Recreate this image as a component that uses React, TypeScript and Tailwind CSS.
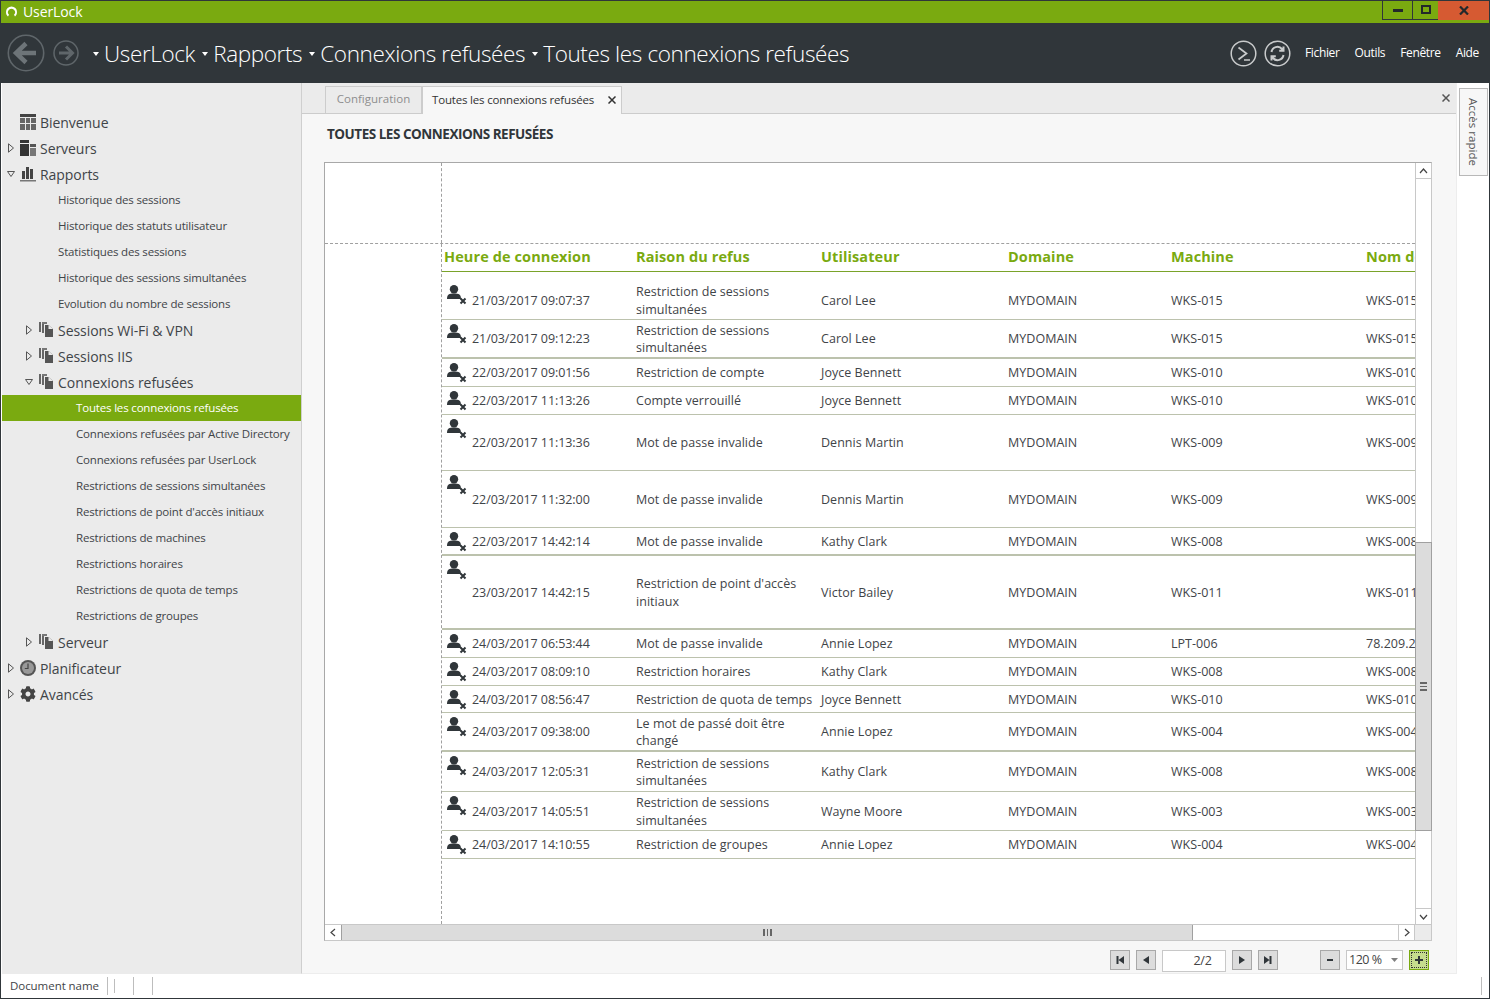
import React from "react";
import { FaCog } from "react-icons/fa";

type Row = { h: string; t: string; r: string[]; u: string; m: string; n: string; b: string };
const rows: Row[] = [
  { h: "h-[39px] mt-[9px]", t: "21/03/2017 09:07:37", r: ["Restriction de sessions", "simultanées"], u: "Carol Lee", m: "WKS-015", n: "WKS-015", b: "border-b" },
  { h: "h-[39px]", t: "21/03/2017 09:12:23", r: ["Restriction de sessions", "simultanées"], u: "Carol Lee", m: "WKS-015", n: "WKS-015", b: "border-b-2" },
  { h: "h-[28px]", t: "22/03/2017 09:01:56", r: ["Restriction de compte"], u: "Joyce Bennett", m: "WKS-010", n: "WKS-010", b: "border-b" },
  { h: "h-[28px]", t: "22/03/2017 11:13:26", r: ["Compte verrouillé"], u: "Joyce Bennett", m: "WKS-010", n: "WKS-010", b: "border-b" },
  { h: "h-[56px]", t: "22/03/2017 11:13:36", r: ["Mot de passe invalide"], u: "Dennis Martin", m: "WKS-009", n: "WKS-009", b: "border-b" },
  { h: "h-[57px]", t: "22/03/2017 11:32:00", r: ["Mot de passe invalide"], u: "Dennis Martin", m: "WKS-009", n: "WKS-009", b: "border-b" },
  { h: "h-[28px]", t: "22/03/2017 14:42:14", r: ["Mot de passe invalide"], u: "Kathy Clark", m: "WKS-008", n: "WKS-008", b: "border-b-2" },
  { h: "h-[74px]", t: "23/03/2017 14:42:15", r: ["Restriction de point d'accès", "initiaux"], u: "Victor Bailey", m: "WKS-011", n: "WKS-011", b: "border-b-2" },
  { h: "h-[28px]", t: "24/03/2017 06:53:44", r: ["Mot de passe invalide"], u: "Annie Lopez", m: "LPT-006", n: "78.209.2", b: "border-b" },
  { h: "h-[28px]", t: "24/03/2017 08:09:10", r: ["Restriction horaires"], u: "Kathy Clark", m: "WKS-008", n: "WKS-008", b: "border-b" },
  { h: "h-[27px]", t: "24/03/2017 08:56:47", r: ["Restriction de quota de temps"], u: "Joyce Bennett", m: "WKS-010", n: "WKS-010", b: "border-b" },
  { h: "h-[39px]", t: "24/03/2017 09:38:00", r: ["Le mot de passé doit être", "changé"], u: "Annie Lopez", m: "WKS-004", n: "WKS-004", b: "border-b-2" },
  { h: "h-[40px]", t: "24/03/2017 12:05:31", r: ["Restriction de sessions", "simultanées"], u: "Kathy Clark", m: "WKS-008", n: "WKS-008", b: "border-b" },
  { h: "h-[39px]", t: "24/03/2017 14:05:51", r: ["Restriction de sessions", "simultanées"], u: "Wayne Moore", m: "WKS-003", n: "WKS-003", b: "border-b" },
  { h: "h-[28px]", t: "24/03/2017 14:10:55", r: ["Restriction de groupes"], u: "Annie Lopez", m: "WKS-004", n: "WKS-004", b: "border-b" },
];

const cols = "grid grid-cols-[194px_185px_187px_163px_195px_200px]";

const Expander = ({ open }: { open?: boolean }) => (
  <svg width="8" height="10" viewBox="0 0 8 10" className="shrink-0">
    {open ? (
      <path d="M0.5 2.5H7.5L4 7.5Z" fill="none" stroke="#555" />
    ) : (
      <path d="M1.5 0.8V9.2L6.5 5Z" fill="none" stroke="#555" />
    )}
  </svg>
);

const Docs = () => (
  <svg width="16" height="16" viewBox="0 0 16 16" className="shrink-0">
    <path d="M1 0h2v10H1zM4 0h2v11H4z" fill="#666" />
    <path d="M7 3h3.500L15 7v8H7z" fill="#555" />
    <path d="M10.500 3L15 7h-4.500z" fill="#ebebeb" />
    <path d="M4 0h5v2H4z" fill="#777" />
  </svg>
);

const GridIcon = () => (
  <svg width="16" height="16" viewBox="0 0 16 16" className="shrink-0">
    <rect x="0" y="0" width="16" height="3" fill="#444" />
    <rect x="0" y="4" width="5" height="5" fill="#666" />
    <rect x="6" y="4" width="4" height="5" fill="#666" />
    <rect x="11" y="4" width="5" height="5" fill="#666" />
    <rect x="0" y="10" width="5" height="6" fill="#666" />
    <rect x="6" y="10" width="4" height="6" fill="#666" />
    <rect x="11" y="10" width="5" height="6" fill="#666" />
  </svg>
);

const ServerIcon = () => (
  <svg width="16" height="16" viewBox="0 0 16 16" className="shrink-0">
    <rect x="0" y="0" width="9" height="3" fill="#333" />
    <rect x="0" y="4" width="9" height="12" fill="#333" />
    <rect x="10" y="4" width="6" height="3" fill="#555" />
    <rect x="10" y="8" width="6" height="8" fill="#777" />
  </svg>
);

const BarsIcon = () => (
  <svg width="16" height="16" viewBox="0 0 16 16" className="shrink-0">
    <rect x="2" y="5" width="3" height="8" fill="#444" />
    <rect x="6" y="1" width="3" height="12" fill="#444" />
    <rect x="10" y="3" width="3" height="10" fill="#444" />
    <rect x="0" y="14" width="16" height="1.5" fill="#777" />
  </svg>
);

const ClockIcon = () => (
  <svg width="16" height="16" viewBox="0 0 16 16" className="shrink-0">
    <circle cx="8" cy="8" r="8" fill="#555" />
    <circle cx="8" cy="8" r="6" fill="#999" />
    <path d="M8 3.5V8.5H4.8" fill="none" stroke="#444" strokeWidth="1.2" />
  </svg>
);

const TreeRow = ({ pad, exp, icon, text, small, active }: { pad: string; exp?: "open" | "closed"; icon?: React.ReactNode; text: string; small?: boolean; active?: boolean }) => (
  <div className={`relative flex h-[26px] items-center ${pad} ${active ? "bg-[#7aaa10] text-white" : "text-[#3f4448]"}`}>
    {exp && (
      <span className="-ml-[13px] mr-[5px] flex w-[8px]">
        <Expander open={exp === "open"} />
      </span>
    )}
    {icon && <span className="mr-[4px] flex">{icon}</span>}
    <span className={`whitespace-nowrap ${small ? "text-[11.5px] tracking-[-0.17px]" : "text-[14px] tracking-[-0.05px]"}`}>{text}</span>
  </div>
);

const UserX = () => (
  <svg width="20" height="20" viewBox="0 0 20 20" className="mt-[3px] mr-[5px] shrink-0 self-start">
    <circle cx="7" cy="4.2" r="4.2" fill="#30363a" />
    <path d="M0 14c0-4.500 2-5.500 7-5.500s7 1 7 5.500z" fill="#30363a" />
    <path d="M13.500 13.500l5 5M18.500 13.500l-5 5" stroke="#30363a" strokeWidth="2" />
  </svg>
);

const Crumb = ({ text }: { text: string }) => (
  <span className="flex items-center">
    <svg width="6" height="4" viewBox="0 0 6 4" className="mr-[5px] mt-[1px]">
      <path d="M0 0H6L3 4Z" fill="#fff" />
    </svg>
    <span className="mt-[2px] mr-[7px] whitespace-nowrap text-[22.5px] font-light tracking-[-0.37px] text-white">{text}</span>
  </span>
);

const TBtn = ({ d, ml }: { d: string; ml: string }) => (
  <div className={`flex h-[20px] w-[20px] items-center justify-center border border-[#a8a8a8] bg-[#dcdcdc] ${ml}`}>
    <svg width="10" height="10" viewBox="0 0 10 10">
      <path d={d} fill="#30363a" />
    </svg>
  </div>
);

export default function App() {
  return (
    <div className="flex h-[999px] w-[1490px] flex-col overflow-hidden border border-[#30363a] bg-white font-['Open_Sans','Noto_Sans',sans-serif]">
      {/* title bar */}
      <div className="flex h-[22px] shrink-0 items-start bg-[#7aaa10]">
        <div className="flex h-[21px] flex-1 items-center pl-[4px]">
          <svg width="13" height="13" viewBox="0 0 13 13">
            <path d="M3 11.500C1.500 10.500 1 8.500 1 7a5.500 5.500 0 0 1 11 0c0 1.500-.5 3.500-2 4.500L9 9.800A3.500 3.500 0 1 0 4 9.800z" fill="#fff" />
          </svg>
          <span className="ml-[5px] text-[14px] tracking-[-0.1px] text-white">UserLock</span>
        </div>
        <div className="-mt-px flex h-[20px]">
          <div className="flex w-[30px] items-center justify-center border-b border-l border-[#30363a]">
            <div className="mt-[2px] h-[3px] w-[10px] bg-[#23282b]" />
          </div>
          <div className="flex w-[26px] items-center justify-center border-b border-l border-[#30363a]">
            <div className="h-[9px] w-[10px] border-2 border-[#23282b]" />
          </div>
          <div className="flex w-[51px] items-center justify-center bg-[#d65a32]">
            <svg width="10" height="9" viewBox="0 0 10 9">
              <path d="M1 0.500l8 8M9 0.500l-8 8" stroke="#23282b" strokeWidth="2.200" />
            </svg>
          </div>
        </div>
      </div>
      {/* header */}
      <div className="flex h-[60px] shrink-0 items-center bg-[#30363a] pr-[10px] pl-[6px]">
        <svg width="38" height="38" viewBox="0 0 38 38">
          <circle cx="19" cy="19" r="17.700" fill="none" stroke="#5f666a" strokeWidth="1.600" />
          <path d="M9 19h20M19 9.500L9 19l10 9.500" fill="none" stroke="#6d7478" strokeWidth="4.500" />
        </svg>
        <svg width="26" height="26" viewBox="0 0 26 26" className="ml-[8px]">
          <circle cx="13" cy="13" r="12" fill="none" stroke="#5f666a" strokeWidth="1.500" />
          <path d="M6 13h13M13 6.500l6.500 6.500-6.500 6.500" fill="none" stroke="#5f666a" strokeWidth="3" />
        </svg>
        <div className="ml-[14px] flex flex-1 items-center">
          <Crumb text="UserLock" />
          <Crumb text="Rapports" />
          <Crumb text="Connexions refusées" />
          <Crumb text="Toutes les connexions refusées" />
        </div>
        <svg width="27" height="27" viewBox="0 0 27 27">
          <circle cx="13.500" cy="13.500" r="12.300" fill="none" stroke="#c9cbcc" strokeWidth="1.500" />
          <path d="M8.500 7.500l8 6-8 6M14 20h6" fill="none" stroke="#c9cbcc" strokeWidth="1.700" />
        </svg>
        <svg width="27" height="27" viewBox="0 0 27 27" className="ml-[7px]">
          <circle cx="13.500" cy="13.500" r="12.300" fill="none" stroke="#c9cbcc" strokeWidth="1.500" />
          <path d="M7.500 12a6 6 0 0 1 10.500-3l1.500 1.500M19.500 6.500v4.300h-4.300M19.500 15a6 6 0 0 1-10.500 3l-1.500-1.500M7.500 20.500v-4.300h4.300" fill="none" stroke="#c9cbcc" strokeWidth="2" />
        </svg>
        <nav className="ml-[14px] flex gap-[15px] text-[12px] tracking-[-0.35px] text-white">
          <span>Fichier</span>
          <span>Outils</span>
          <span>Fenêtre</span>
          <span>Aide</span>
        </nav>
      </div>
      {/* body */}
      <div className="flex min-h-0 flex-1">
        {/* sidebar */}
        <aside className="ml-px w-[299px] shrink-0 bg-[#ebebeb] pt-[26px]">
          <TreeRow pad="pl-[18px]" icon={<GridIcon />} text="Bienvenue" />
          <TreeRow pad="pl-[18px]" exp="closed" icon={<ServerIcon />} text="Serveurs" />
          <TreeRow pad="pl-[18px]" exp="open" icon={<BarsIcon />} text="Rapports" />
          <TreeRow pad="pl-[56px]" small text="Historique des sessions" />
          <TreeRow pad="pl-[56px]" small text="Historique des statuts utilisateur" />
          <TreeRow pad="pl-[56px]" small text="Statistiques des sessions" />
          <TreeRow pad="pl-[56px]" small text="Historique des sessions simultanées" />
          <TreeRow pad="pl-[56px]" small text="Evolution du nombre de sessions" />
          <TreeRow pad="pl-[36px]" exp="closed" icon={<Docs />} text="Sessions Wi-Fi & VPN" />
          <TreeRow pad="pl-[36px]" exp="closed" icon={<Docs />} text="Sessions IIS" />
          <TreeRow pad="pl-[36px]" exp="open" icon={<Docs />} text="Connexions refusées" />
          <TreeRow pad="pl-[74px]" small active text="Toutes les connexions refusées" />
          <TreeRow pad="pl-[74px]" small text="Connexions refusées par Active Directory" />
          <TreeRow pad="pl-[74px]" small text="Connexions refusées par UserLock" />
          <TreeRow pad="pl-[74px]" small text="Restrictions de sessions simultanées" />
          <TreeRow pad="pl-[74px]" small text="Restrictions de point d'accès initiaux" />
          <TreeRow pad="pl-[74px]" small text="Restrictions de machines" />
          <TreeRow pad="pl-[74px]" small text="Restrictions horaires" />
          <TreeRow pad="pl-[74px]" small text="Restrictions de quota de temps" />
          <TreeRow pad="pl-[74px]" small text="Restrictions de groupes" />
          <TreeRow pad="pl-[36px]" exp="closed" icon={<Docs />} text="Serveur" />
          <TreeRow pad="pl-[18px]" exp="closed" icon={<ClockIcon />} text="Planificateur" />
          <TreeRow pad="pl-[18px]" exp="closed" icon={<FaCog size={16} color="#444" />} text="Avancés" />
        </aside>
        {/* main */}
        <main className="flex w-[1156px] shrink-0 flex-col border-r border-b border-l border-r-[#ededed] border-b-[#ededed] border-l-[#cfcfcf] bg-[#f7f7f7]">
          <div className="flex h-[31px] shrink-0 items-end border-b border-[#cccccc] bg-[#ebebeb] pl-[23px]">
            <div className="-mb-px flex h-[28px] w-[97px] items-center justify-center border border-[#cccccc] pb-[2px] text-[11.500px] tracking-[0.02px] text-[#8e8e8e]">Configuration</div>
            <div className="-mb-px flex h-[28px] w-[200px] items-center border-x border-t border-[#cccccc] bg-[#f7f7f7] pb-[2px] pl-[9px] text-[11.500px] tracking-[-0.18px] text-[#333]">
              <span className="flex-1 whitespace-nowrap">Toutes les connexions refusées</span>
              <svg width="8" height="8" viewBox="0 0 8 8" className="mr-[5px]">
                <path d="M0.500 0.500l7 7M7.500 0.500l-7 7" stroke="#333" strokeWidth="1.500" />
              </svg>
            </div>
            <div className="flex-1" />
            <svg width="8" height="8" viewBox="0 0 8 8" className="mr-[6px] mb-[11px]">
              <path d="M0.500 0.500l7 7M7.500 0.500l-7 7" stroke="#555" strokeWidth="1.500" />
            </svg>
          </div>
          <h1 className="mt-[11px] ml-[25px] h-[19px] text-[13.500px] leading-[19px] font-bold tracking-[-0.48px] text-[#30363a]">TOUTES LES CONNEXIONS REFUSÉES</h1>
          {/* report frame */}
          <div className="mt-[18px] ml-[22px] flex h-[779px] w-[1108px] flex-col border border-t-[#a8a8a8] border-r-[#c8c8c8] border-b-[#c8c8c8] border-l-[#a8a8a8] bg-white">
            <div className="flex min-h-0 flex-1">
              {/* page */}
              <div className="flex min-w-0 flex-1 flex-col overflow-hidden">
                <div className="flex h-[81px] shrink-0 border-b border-dashed border-[#a0a0a0]">
                  <div className="w-[117px] border-r border-dashed border-[#a0a0a0]" />
                </div>
                <div className="flex min-h-0 flex-1">
                  <div className="w-[117px] shrink-0 border-r border-dashed border-[#a0a0a0]" />
                  <div className="w-[1000px] shrink-0">
                    <div className={`${cols} h-[28px] items-center border-b border-[#7aa32a] pb-[2px] text-[14.500px] font-bold tracking-[0.1px] text-[#7aaa10]`}>
                      <span className="pl-[2px]">Heure de connexion</span>
                      <span>Raison du refus</span>
                      <span>Utilisateur</span>
                      <span>Domaine</span>
                      <span>Machine</span>
                      <span className="whitespace-nowrap">Nom de</span>
                    </div>
                    {rows.map((row) => (
                      <div key={row.t} className={`${cols} ${row.h} ${row.b} items-center border-[#bcc2ad] pt-[1px] text-[12.500px] leading-[17.500px] tracking-[0.03px] text-[#3f4448]`}>
                        <div className="flex h-full items-center pl-[5px]">
                          <UserX />
                          <span className="whitespace-nowrap tracking-[-0.07px]">{row.t}</span>
                        </div>
                        <div className="whitespace-nowrap">
                          {row.r.map((line) => (
                            <div key={line}>{line}</div>
                          ))}
                        </div>
                        <span className="whitespace-nowrap">{row.u}</span>
                        <span>MYDOMAIN</span>
                        <span>{row.m}</span>
                        <span className="whitespace-nowrap">{row.n}</span>
                      </div>
                    ))}
                  </div>
                </div>
              </div>
              {/* vertical scrollbar */}
              <div className="flex w-[16px] shrink-0 flex-col border-l border-[#c8c8c8] bg-white">
                <div className="flex h-[16px] items-center justify-center border-b border-[#c8c8c8]">
                  <svg width="9" height="6" viewBox="0 0 9 6"><path d="M1 5l3.500-4L8 5" fill="none" stroke="#444" strokeWidth="1.200" /></svg>
                </div>
                <div className="h-[363px]" />
                <div className="-ml-px -mr-px flex h-[289px] items-center justify-center border border-[#a0a0a0] bg-[#dcdcdc]">
                  <div className="h-[9px] w-[7px] border-y-2 border-[#666] bg-[linear-gradient(#dcdcdc_35%,#666_35%,#666_65%,#dcdcdc_65%)]" />
                </div>
                <div className="flex-1" />
                <div className="flex h-[16px] items-center justify-center border-t border-[#c8c8c8]">
                  <svg width="9" height="6" viewBox="0 0 9 6"><path d="M1 1l3.500 4L8 1" fill="none" stroke="#444" strokeWidth="1.200" /></svg>
                </div>
              </div>
            </div>
            {/* horizontal scrollbar */}
            <div className="flex h-[16px] shrink-0 border-t border-[#c8c8c8]">
              <div className="flex w-[16px] items-center justify-center bg-white">
                <svg width="6" height="9" viewBox="0 0 6 9"><path d="M5 1L1 4.500 5 8" fill="none" stroke="#444" strokeWidth="1.200" /></svg>
              </div>
              <div className="flex w-[852px] items-center justify-center border-x border-[#a0a0a0] bg-[#dcdcdc]">
                <div className="h-[7px] w-[9px] border-x-2 border-[#666] bg-[linear-gradient(90deg,#dcdcdc_35%,#666_35%,#666_65%,#dcdcdc_65%)]" />
              </div>
              <div className="flex-1 bg-white" />
              <div className="flex w-[17px] items-center justify-center border-x border-[#c8c8c8] bg-white">
                <svg width="6" height="9" viewBox="0 0 6 9"><path d="M1 1l4 3.500L1 8" fill="none" stroke="#444" strokeWidth="1.200" /></svg>
              </div>
              <div className="w-[16px] bg-[#ebebeb]" />
            </div>
          </div>
          {/* pager */}
          <div className="mt-[9px] ml-[808px] flex items-start">
            <TBtn ml="" d="M1.500 1h2v8h-2zM9 1v8L3.500 5z" />
            <TBtn ml="ml-[6px]" d="M8 1v8L2 5z" />
            <div className="ml-[6px] flex h-[22px] w-[64px] items-center justify-center border border-[#c8c8c8] bg-white pl-[17px] text-[12.500px] tracking-[-0.28px] text-[#444]">2/2</div>
            <TBtn ml="ml-[6px]" d="M2 1v8l6-4z" />
            <TBtn ml="ml-[6px]" d="M1 1v8l5.500-4zM6.500 1h2v8h-2z" />
            <TBtn ml="ml-[42px]" d="M2 4h6v2H2z" />
            <div className="ml-[6px] flex h-[20px] w-[57px] items-center border border-[#c8c8c8] bg-white pl-[2px] text-[12.500px] tracking-[-0.5px] text-[#444]">
              <span className="flex-1">120 %</span>
              <svg width="7" height="4" viewBox="0 0 7 4" className="mr-[4px]"><path d="M0 0h7L3.500 4z" fill="#808080" /></svg>
            </div>
            <div className="ml-[6px] flex h-[20px] w-[20px] items-center justify-center border border-[#7aaa10] bg-[#c5dc8e]">
              <div className="flex h-[16px] w-[16px] items-center justify-center border border-dotted border-[#333]">
                <svg width="10" height="10" viewBox="0 0 10 10"><path d="M4 1h2v3h3v2H6v3H4V6H1V4h3z" fill="#30363a" /></svg>
              </div>
            </div>
          </div>
        </main>
        {/* quick access rail */}
        <div className="flex-1 pt-[5px] pl-[2px]">
          <div className="flex h-[88px] w-[29px] items-center justify-center border border-[#b8b8b8] bg-[#f7f7f7]">
            <span className="[writing-mode:vertical-rl] text-[11.500px] tracking-[0.02px] whitespace-nowrap text-[#555]">Accès rapide</span>
          </div>
        </div>
      </div>
      {/* status bar */}
      <div className="flex h-[24px] shrink-0 items-center pl-[9px] text-[11.500px] tracking-[-0.05px] text-[#3f4448]">
        <span className="w-[97px] whitespace-nowrap">Document name</span>
        <div className="h-[18px] w-px bg-[#bdbdbd]" />
        <div className="ml-[6px] h-[14px] w-px bg-[#bdbdbd]" />
        <div className="ml-[18px] h-[18px] w-px bg-[#bdbdbd]" />
        <div className="ml-[18px] h-[18px] w-px bg-[#bdbdbd]" />
        <div className="flex-1" />
        <div className="mr-[7px] h-[18px] w-px bg-[#bdbdbd]" />
      </div>
    </div>
  );
}
